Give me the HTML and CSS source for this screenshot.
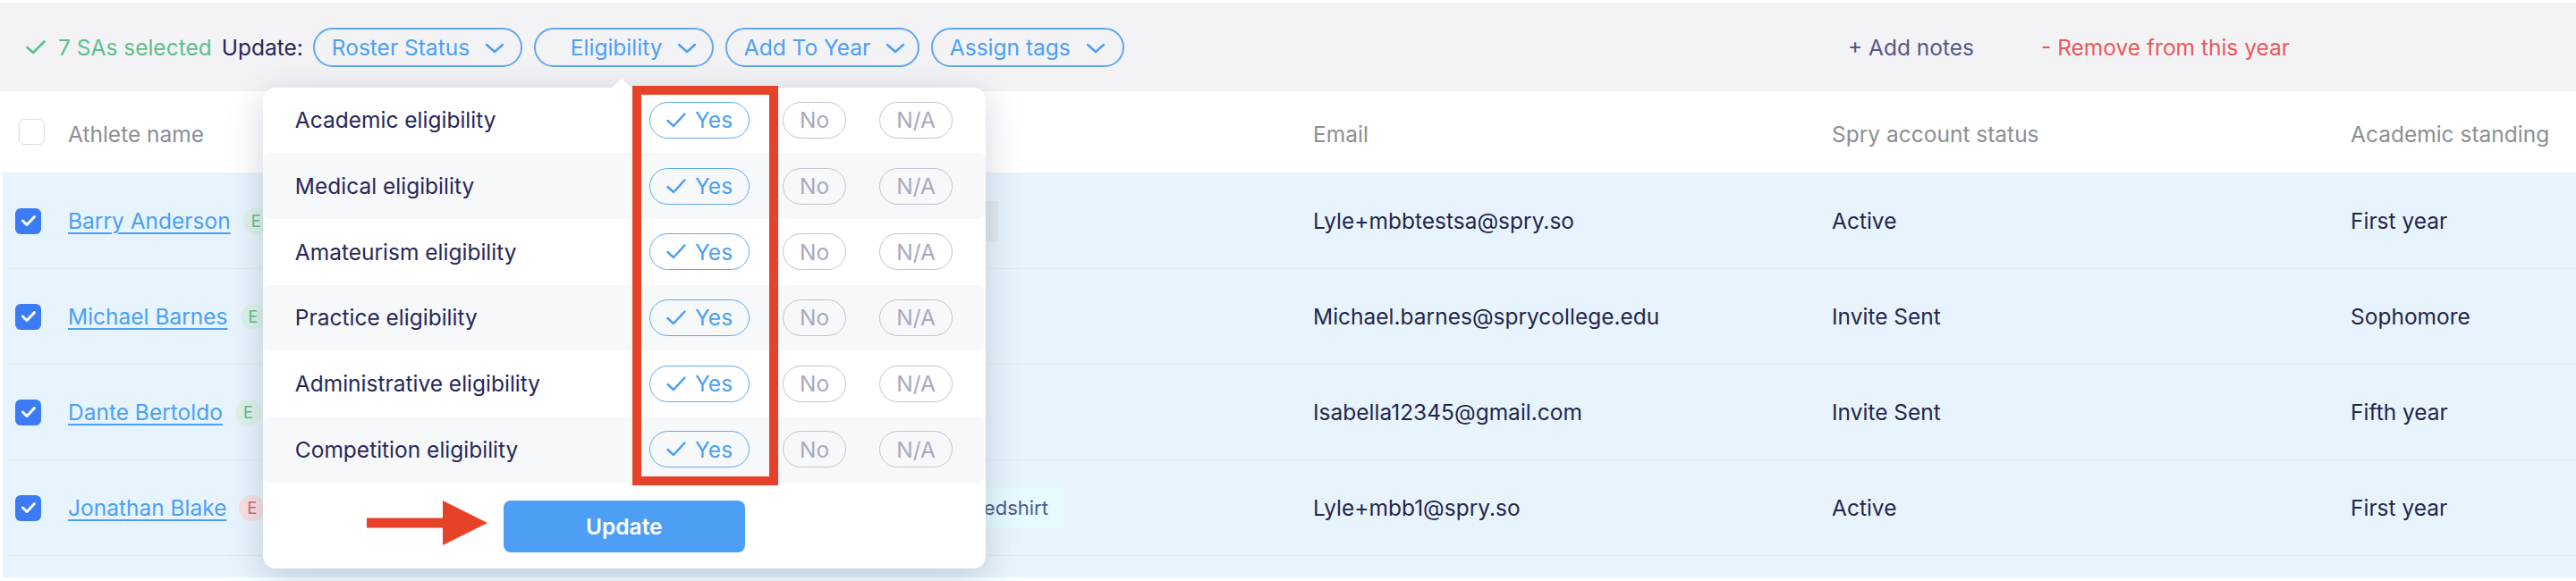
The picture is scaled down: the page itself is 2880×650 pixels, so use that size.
FILE: index.html
```html
<!DOCTYPE html>
<html lang="en">
<head>
  <meta charset="UTF-8">
  <title>Roster</title>
  <link rel="stylesheet" href="styles.css">
</head>
<body>

<div class="toolbar">
  <span class="selected">
    <svg class="selected-check" width="22" height="16" viewBox="0 0 22 16"><polyline points="1.5,8 8,14 20.5,1.5" fill="none" stroke="currentColor" stroke-width="2.6" stroke-linecap="round" stroke-linejoin="round"/></svg>
    7 SAs selected
  </span>
  <span class="update-label">Update:</span>

  <button class="pill pill-roster">Roster Status
    <svg class="chevron" width="22" height="12" viewBox="0 0 22 12"><polyline points="2,2 11,10 20,2" fill="none" stroke="currentColor" stroke-width="2.4" stroke-linecap="round" stroke-linejoin="round"/></svg>
  </button>

  <div class="pill-wrap">
    <button class="pill pill-open">Eligibility
      <svg class="chevron" width="22" height="12" viewBox="0 0 22 12"><polyline points="2,2 11,10 20,2" fill="none" stroke="currentColor" stroke-width="2.4" stroke-linecap="round" stroke-linejoin="round"/></svg>
    </button>

    <div class="popover">
      <div class="elig-row">
        <span class="elig-label">Academic eligibility</span>
        <span class="opt opt-on"><svg width="22" height="17" viewBox="0 0 22 17"><polyline points="1.5,9 8,15 20.5,1.5" fill="none" stroke="currentColor" stroke-width="2.4" stroke-linecap="round" stroke-linejoin="round"/></svg>Yes</span>
        <span class="opt">No</span>
        <span class="opt">N/A</span>
      </div>
      <div class="elig-row">
        <span class="elig-label">Medical eligibility</span>
        <span class="opt opt-on"><svg width="22" height="17" viewBox="0 0 22 17"><polyline points="1.5,9 8,15 20.5,1.5" fill="none" stroke="currentColor" stroke-width="2.4" stroke-linecap="round" stroke-linejoin="round"/></svg>Yes</span>
        <span class="opt">No</span>
        <span class="opt">N/A</span>
      </div>
      <div class="elig-row">
        <span class="elig-label">Amateurism eligibility</span>
        <span class="opt opt-on"><svg width="22" height="17" viewBox="0 0 22 17"><polyline points="1.5,9 8,15 20.5,1.5" fill="none" stroke="currentColor" stroke-width="2.4" stroke-linecap="round" stroke-linejoin="round"/></svg>Yes</span>
        <span class="opt">No</span>
        <span class="opt">N/A</span>
      </div>
      <div class="elig-row">
        <span class="elig-label">Practice eligibility</span>
        <span class="opt opt-on"><svg width="22" height="17" viewBox="0 0 22 17"><polyline points="1.5,9 8,15 20.5,1.5" fill="none" stroke="currentColor" stroke-width="2.4" stroke-linecap="round" stroke-linejoin="round"/></svg>Yes</span>
        <span class="opt">No</span>
        <span class="opt">N/A</span>
      </div>
      <div class="elig-row">
        <span class="elig-label">Administrative eligibility</span>
        <span class="opt opt-on"><svg width="22" height="17" viewBox="0 0 22 17"><polyline points="1.5,9 8,15 20.5,1.5" fill="none" stroke="currentColor" stroke-width="2.4" stroke-linecap="round" stroke-linejoin="round"/></svg>Yes</span>
        <span class="opt">No</span>
        <span class="opt">N/A</span>
      </div>
      <div class="elig-row">
        <span class="elig-label">Competition eligibility</span>
        <span class="opt opt-on"><svg width="22" height="17" viewBox="0 0 22 17"><polyline points="1.5,9 8,15 20.5,1.5" fill="none" stroke="currentColor" stroke-width="2.4" stroke-linecap="round" stroke-linejoin="round"/></svg>Yes</span>
        <span class="opt">No</span>
        <span class="opt">N/A</span>
      </div>

      <div class="popover-footer">
        <button class="update-btn">Update</button>
      </div>

      <!-- callouts -->
      <div class="callout-box"></div>
      <svg class="callout-arrow" width="135" height="50" viewBox="0 0 135 50">
        <rect x="0" y="19.5" width="86" height="11" fill="#e6422a"/>
        <polygon points="85,0 135,25 85,50" fill="#e6422a"/>
      </svg>
    </div>
  </div>

  <button class="pill pill-year">Add To Year
    <svg class="chevron" width="22" height="12" viewBox="0 0 22 12"><polyline points="2,2 11,10 20,2" fill="none" stroke="currentColor" stroke-width="2.4" stroke-linecap="round" stroke-linejoin="round"/></svg>
  </button>
  <button class="pill pill-tags">Assign tags
    <svg class="chevron" width="22" height="12" viewBox="0 0 22 12"><polyline points="2,2 11,10 20,2" fill="none" stroke="currentColor" stroke-width="2.4" stroke-linecap="round" stroke-linejoin="round"/></svg>
  </button>

  <a class="add-notes">+ Add notes</a>
  <a class="remove-year">- Remove from this year</a>
</div>

<div class="roster">
  <div class="row head-row">
    <div class="cell cell-check"><span class="box"></span></div>
    <div class="cell">Athlete name</div>
    <div class="cell"></div>
    <div class="cell">Email</div>
    <div class="cell">Spry account status</div>
    <div class="cell">Academic standing</div>
  </div>

  <div class="row body-row">
    <div class="cell cell-check"><span class="box box-on"><svg width="18" height="14" viewBox="0 0 18 14"><polyline points="2.5,7 7,11.5 15.5,2.5" fill="none" stroke="#fff" stroke-width="3" stroke-linecap="round" stroke-linejoin="round"/></svg></span></div>
    <div class="cell"><a class="name">Barry Anderson</a><span class="badge badge-ok">E</span></div>
    <div class="cell"><span class="tag tag-muted">+1</span></div>
    <div class="cell">Lyle+mbbtestsa@spry.so</div>
    <div class="cell">Active</div>
    <div class="cell">First year</div>
  </div>

  <div class="row body-row">
    <div class="cell cell-check"><span class="box box-on"><svg width="18" height="14" viewBox="0 0 18 14"><polyline points="2.5,7 7,11.5 15.5,2.5" fill="none" stroke="#fff" stroke-width="3" stroke-linecap="round" stroke-linejoin="round"/></svg></span></div>
    <div class="cell"><a class="name">Michael Barnes</a><span class="badge badge-ok">E</span></div>
    <div class="cell"></div>
    <div class="cell">Michael.barnes@sprycollege.edu</div>
    <div class="cell">Invite Sent</div>
    <div class="cell">Sophomore</div>
  </div>

  <div class="row body-row">
    <div class="cell cell-check"><span class="box box-on"><svg width="18" height="14" viewBox="0 0 18 14"><polyline points="2.5,7 7,11.5 15.5,2.5" fill="none" stroke="#fff" stroke-width="3" stroke-linecap="round" stroke-linejoin="round"/></svg></span></div>
    <div class="cell"><a class="name">Dante Bertoldo</a><span class="badge badge-ok">E</span></div>
    <div class="cell"></div>
    <div class="cell">Isabella12345@gmail.com</div>
    <div class="cell">Invite Sent</div>
    <div class="cell">Fifth year</div>
  </div>

  <div class="row body-row">
    <div class="cell cell-check"><span class="box box-on"><svg width="18" height="14" viewBox="0 0 18 14"><polyline points="2.5,7 7,11.5 15.5,2.5" fill="none" stroke="#fff" stroke-width="3" stroke-linecap="round" stroke-linejoin="round"/></svg></span></div>
    <div class="cell"><a class="name">Jonathan Blake</a><span class="badge badge-bad">E</span></div>
    <div class="cell"><span class="tag tag-cyan">Redshirt</span></div>
    <div class="cell">Lyle+mbb1@spry.so</div>
    <div class="cell">Active</div>
    <div class="cell">First year</div>
  </div>

  <div class="row body-row row-tail"></div>
</div>

</body>
</html>
```

FILE: styles.css
```css
html, body {
  height: 650px;
  overflow: hidden;
}
body {
  margin: 0;
  padding-top: 3px;
  box-sizing: border-box;
  background: #fff;
  font-family: Inter, "Noto Sans", sans-serif;
  font-size: 24.5px;
  color: #25264c;
  width: 2880px;
}

/* bulk action bar */
.toolbar {
  position: relative;
  z-index: 2;
  display: flex;
  align-items: center;
  height: 99px;
  padding: 0 320px 0 29px;
  background: #f3f3f6;
  box-sizing: border-box;
}
.selected {
  display: flex;
  align-items: center;
  gap: 14px;
  color: #5cbf8b;
}
.update-label {
  margin-left: 11px;
  margin-right: 11px;
  color: #27285a;
}
.pill {
  display: inline-flex;
  align-items: center;
  gap: 17px;
  height: 44px;
  padding: 0 0 0 19px;
  margin-right: 13px;
  border: 2px solid #5da8f6;
  border-radius: 22px;
  background: transparent;
  color: #4b9ff5;
  font-family: inherit;
  font-size: 24.5px;
  box-sizing: border-box;
}
.pill-roster { width: 234px; }
.pill-open {
  width: 201px;
  padding-left: 39px;
}
.pill-year { width: 217px; }
.pill-tags { width: 216px; }
.chevron {
  margin-top: 2px;
}
.pill-wrap {
  position: relative;
  display: inline-flex;
}
.add-notes {
  margin-left: auto;
  color: #55578a;
}
.remove-year {
  margin-left: 75px;
  color: #e85a5a;
}

/* eligibility dropdown */
.popover {
  position: absolute;
  left: -303px;
  top: 67px;
  width: 808px;
  background: #fff;
  border-radius: 14px;
  box-shadow: 0 10px 40px rgba(40, 60, 95, 0.22);
}
.popover::before {
  content: "";
  position: absolute;
  left: 390px;
  top: -10px;
  border-left: 11px solid transparent;
  border-right: 11px solid transparent;
  border-bottom: 10px solid #fff;
}
.elig-row {
  display: flex;
  align-items: center;
  height: 73.7px;
  padding-left: 36px;
  border-radius: 8px;
}
.elig-row:nth-child(even) {
  background: #f7f8fa;
}
.elig-label {
  width: 404px;
  color: #27285a;
}
.opt {
  display: inline-flex;
  align-items: center;
  gap: 10px;
  height: 41px;
  padding: 0 18px;
  margin-right: 37px;
  border: 1.5px solid #c3c2d1;
  border-radius: 21px;
  color: #aaa9bd;
  box-sizing: border-box;
}
.opt-on {
  border-color: #5da8f6;
  color: #4b9ff5;
}
.popover-footer {
  display: flex;
  justify-content: center;
  padding: 20px 0 18px;
}
.update-btn {
  width: 270px;
  height: 58px;
  border: 0;
  border-radius: 8px;
  background: #4d9ff5;
  color: #fff;
  font-family: inherit;
  font-size: 24.5px;
  font-weight: 600;
}
.callout-box {
  position: absolute;
  left: 413px;
  top: -2px;
  width: 163px;
  height: 447px;
  border: 10px solid #e6422a;
  box-sizing: border-box;
}
.callout-arrow {
  position: absolute;
  left: 116px;
  top: 462px;
}

/* roster table */
.row {
  display: grid;
  grid-template-columns: 76px 992px 400px 580px 580px 1fr;
  align-items: center;
}
.head-row {
  height: 92px;
  padding-top: 5px;
  box-sizing: border-box;
  border-bottom: 1px solid #eceef1;
  color: #8b9094;
}
.head-row .cell-check {
  padding-left: 21px;
  margin-top: -6px;
}
.body-row {
  grid-template-columns: 73px 992px 400px 580px 580px 1fr;
  margin-left: 3px;
  height: 106px;
  background: #e8f4fd;
  border-bottom: 1px solid #e1ecf5;
}
.row-tail {
  height: 24px;
  border-bottom: 0;
}
.cell {
  display: flex;
  align-items: center;
  white-space: nowrap;
}
.cell-check {
  padding-left: 14px;
}
.box {
  display: flex;
  align-items: center;
  justify-content: center;
  width: 29px;
  height: 29px;
  border: 1.5px solid #d9dcdf;
  border-radius: 6px;
  background: #fff;
  box-sizing: border-box;
}
.box-on {
  border: 0;
  background: #3b7bf6;
}
.name {
  color: #4b9ff5;
  text-decoration: underline;
  text-decoration-thickness: 2px;
  text-underline-offset: 4px;
}
.badge {
  display: inline-flex;
  align-items: center;
  justify-content: center;
  width: 29px;
  height: 29px;
  margin-left: 14px;
  border-radius: 50%;
  font-size: 18px;
}
.badge-ok {
  background: #dff2e8;
  color: #5cbf8b;
}
.badge-bad {
  background: #f8e0e3;
  color: #e06363;
}
.tag {
  display: inline-flex;
  align-items: center;
  height: 45px;
  padding: 0 18px;
  font-size: 22px;
  color: #55578a;
}
.tag-muted {
  padding: 0 12px;
  background: #e4e9ee;
}
.tag-cyan {
  background: #e6fbff;
}
```
